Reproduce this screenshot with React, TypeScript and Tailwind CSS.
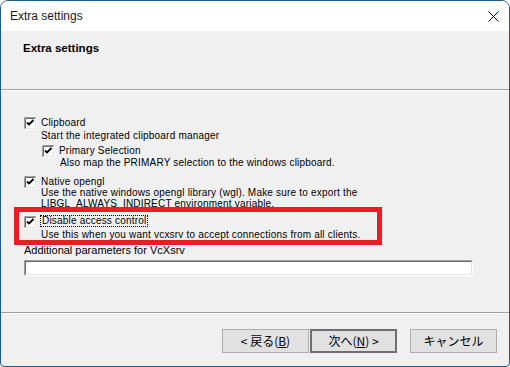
import React from "react";

const Checkbox = () => (
  <svg width="13" height="13" viewBox="0 0 13 13" className="shrink-0 self-start">
    <rect x="2" y="2" width="9" height="9" fill="#ffffff" />
    <path d="M0.5 12V0.5H12" stroke="#a0a0a0" fill="none" />
    <path d="M1.5 11V1.5H11" stroke="#696969" fill="none" />
    <path d="M0 12.5H12.5V0" stroke="#ffffff" fill="none" />
    <path d="M1 11.5H11.5V1" stroke="#e3e3e3" fill="none" />
    <path d="M3 5.5L5 7.5L9.5 3" stroke="#000000" strokeWidth="1.8" fill="none" />
  </svg>
);

const Option = ({ label, focused }: { label: string; focused?: boolean }) => (
  <div className="flex h-[11px] items-start">
    <Checkbox />
    {focused ? (
      <span className="ml-[3px] mt-[-1px] h-[12px] border border-dotted border-black px-[1px] leading-[10px]">
        {label}
      </span>
    ) : (
      <span className="ml-[4px] leading-[11px]">{label}</span>
    )}
  </div>
);

const Button = ({
  children,
  primary,
}: {
  children: React.ReactNode;
  primary?: boolean;
}) => (
  <div
    className={
      primary
        ? "flex h-[24px] w-[87px] items-center justify-center border-2 border-[#6f6f6f] bg-[#e1e1e1] text-[12px] text-black"
        : "flex h-[24px] w-[87px] items-center justify-center border border-[#adadad] bg-[#e1e1e1] text-[12px] text-black"
    }
    style={{ fontFamily: '"Noto Sans CJK JP", "Liberation Sans", sans-serif' }}
  >
    {children}
  </div>
);

export default function App() {
  return (
    <div className="bg-white">
      <div
        className="relative flex h-[367px] w-[510px] flex-col overflow-hidden rounded-t-[8px] rounded-b-[4px] border border-[#24598a] bg-[#f0f0f0]"
        style={{ fontFamily: '"Liberation Sans", Arial, sans-serif' }}
      >
        {/* title bar */}
        <div className="flex h-[30px] shrink-0 items-center justify-between bg-white pl-[9px] pr-[10px]">
          <span className="text-[12px] text-[#1a1a1a]">Extra settings</span>
          <svg width="11" height="11" viewBox="0 0 11 11">
            <path d="M0.5 0.5L10.5 10.5M10.5 0.5L0.5 10.5" stroke="#000" strokeWidth="1" />
          </svg>
        </div>

        {/* header */}
        <div className="h-[58px] shrink-0 pl-[22px] pt-[11px] text-[11.5px] font-bold leading-[13px] text-black">
          Extra settings
        </div>
        <div className="h-px shrink-0 bg-[#a0a0a0]" />
        <div className="h-px shrink-0 bg-white" />

        {/* content */}
        <div className="flex h-[221px] shrink-0 flex-col pl-[23px] pt-[26px] text-[10px] tracking-[0.2px] text-black">
          <Option label="Clipboard" />
          <div className="ml-[17px] mt-[2px] h-[11px] leading-[11px]">Start the integrated clipboard manager</div>
          <div className="ml-[18px] mt-[4px]">
            <Option label="Primary Selection" />
          </div>
          <div className="ml-[36px] mt-[1px] h-[11px] leading-[11px]">
            Also map the PRIMARY selection to the windows clipboard.
          </div>
          <div className="mt-[8px]">
            <Option label="Native opengl" />
          </div>
          <div className="ml-[17px] h-[11px] leading-[11px]">
            Use the native windows opengl library (wgl). Make sure to export the
          </div>
          <div className="ml-[17px] h-[11px] leading-[11px]">LIBGL_ALWAYS_INDIRECT environment variable.</div>
          <div className="mt-[7px]">
            <Option label="Disable access control" focused />
          </div>
          <div className="ml-[17px] mt-[2px] h-[11px] leading-[11px]">
            Use this when you want vcxsrv to accept connections from all clients.
          </div>
          <div className="mt-[4px] h-[13px] text-[11px] leading-[13px] tracking-normal">
            Additional parameters for VcXsrv
          </div>
          <div className="mt-[3px] h-[16px] w-[449px] border-l border-t border-b border-r border-l-[#a0a0a0] border-t-[#a0a0a0] border-b-white border-r-white">
            <div className="h-full w-full border-l border-t border-b border-r border-l-[#696969] border-t-[#696969] border-b-[#e3e3e3] border-r-[#e3e3e3] bg-white" />
          </div>
        </div>

        <div className="h-px shrink-0 bg-[#a0a0a0]" />
        <div className="h-px shrink-0 bg-white" />

        {/* buttons */}
        <div className="flex flex-1 items-start justify-end pr-[12px] pt-[15px]">
          <Button>
            &lt; 戻る(<span className="underline">B</span>)
          </Button>
          <div className="ml-[1px]">
            <Button primary>
              次へ(<span className="underline">N</span>) &gt;
            </Button>
          </div>
          <div className="ml-[13px]">
            <Button>キャンセル</Button>
          </div>
        </div>

        {/* annotation */}
        <div className="absolute left-[13px] top-[206px] h-[38px] w-[368px] border-[5px] border-[#ed1c24]" />
      </div>
    </div>
  );
}
